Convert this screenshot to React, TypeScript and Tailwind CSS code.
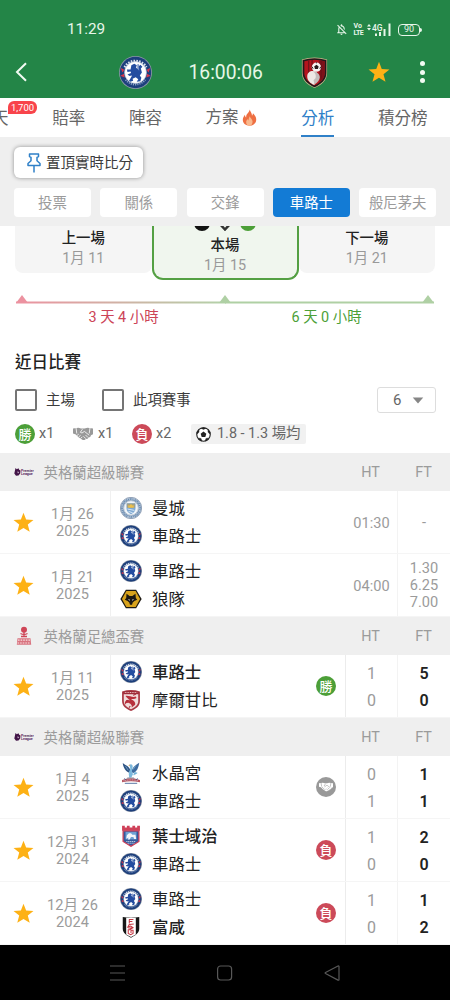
import type { ReactNode } from "react";
import clsx from "clsx";
import { MdOutlineNotificationsOff } from "react-icons/md";

type Team = { name: string; crest: string; bold?: boolean };
type Match = {
  id: number;
  day: string;
  year: string;
  home: Team;
  away: Team;
  result?: "win" | "draw" | "loss";
  time?: string;
  odds?: string[];
  ht?: [number, number];
  ft?: [number, number];
};
type League = { id: number; name: string; logo: "pl" | "fa"; matches: Match[] };

const chelsea: Team = { name: "車路士", crest: "chelsea" };

const leagues: League[] = [
  {
    id: 1,
    name: "英格蘭超級聯賽",
    logo: "pl",
    matches: [
      { id: 11, day: "1月 26", year: "2025", home: { name: "曼城", crest: "city" }, away: chelsea, time: "01:30", odds: ["-"] },
      { id: 12, day: "1月 21", year: "2025", home: chelsea, away: { name: "狼隊", crest: "wolves" }, time: "04:00", odds: ["1.30", "6.25", "7.00"] },
    ],
  },
  {
    id: 2,
    name: "英格蘭足總盃賽",
    logo: "fa",
    matches: [
      { id: 21, day: "1月 11", year: "2025", home: { ...chelsea, bold: true }, away: { name: "摩爾甘比", crest: "morecambe" }, result: "win", ht: [1, 0], ft: [5, 0] },
    ],
  },
  {
    id: 3,
    name: "英格蘭超級聯賽",
    logo: "pl",
    matches: [
      { id: 31, day: "1月 4", year: "2025", home: { name: "水晶宮", crest: "palace" }, away: chelsea, result: "draw", ht: [0, 1], ft: [1, 1] },
      { id: 32, day: "12月 31", year: "2024", home: { name: "葉士域治", crest: "ipswich", bold: true }, away: chelsea, result: "loss", ht: [1, 0], ft: [2, 0] },
      { id: 33, day: "12月 26", year: "2024", home: chelsea, away: { name: "富咸", crest: "fulham", bold: true }, result: "loss", ht: [1, 0], ft: [1, 2] },
    ],
  },
];

const filters = ["投票", "關係", "交鋒", "車路士", "般尼茅夫"];

const crests: Record<string, ReactNode> = {
  chelsea: (
    <>
      <circle cx="16" cy="16" r="16" fill="#8d97a8" />
      <circle cx="16" cy="16" r="15.2" fill="#1d3f7c" />
      <path d="M5.5 11A11.9 11.9 0 0 1 26.500 11" fill="none" stroke="#d9e0ec" strokeWidth="2.300" strokeDasharray="1.500 1.200" />
      <path d="M6.500 23A11.900 11.900 0 0 0 25.500 23" fill="none" stroke="#8ea4ca" strokeWidth="1.700" strokeDasharray="1.100 1" />
      <path d="M2.500 12.500l2 1-1 1.500zM2.500 19l2-1 .3 2zM29.500 12.500l-2 1 1 1.500zM29.500 19l-2-1-.3 2z" fill="#d9354a" stroke="#d9354a" />
      <circle cx="16" cy="16" r="10.600" fill="#fff" stroke="#b9c3d6" strokeWidth=".6" />
      <path
        d="M12 9l2.800-1.500 2.500 1.500-.8 2.200 3 2.800-.3-4 1.500-1.500 2 2-1.500 1.500 1 4-2 3 1.500 2-1 3.500-3.500.5 1.500-2.500-2.500-2-3 1.500.5 2-2.500 1-1.500-1 1.500-2.500 1.500-2.500-2.500.5-2-1.500 3.500-1.500-.5-1.500-3 .5-.5-2.500 3.500.2z"
        fill="#244da0"
      />
      <path d="M18.500 8v6M13.500 17.500l4-1.500" stroke="#244da0" strokeWidth="1" />
    </>
  ),
  bournemouth: (
    <>
      <path d="M3 2.500Q16-1.500 29 2.500v14C29 24 23 29 16 32 9 29 3 24 3 16.500z" fill="#cdb88c" />
      <path d="M3.700 3.200Q16-.6 28.300 3.200v13.200C28.300 23.500 22.500 28.200 16 31.200 9.500 28.200 3.700 23.500 3.700 16.400z" fill="#211a1b" />
      <path d="M5.500 4.500Q16 1.200 26.500 4.500v12c0 6-4.500 10-10.500 13-6-3-10.500-7-10.500-13z" fill="#b5141d" />
      <path d="M20.500 3.500l6 1v12c0 4-2 7-5 9.500z" fill="#7d1219" />
      <path d="M10 4v14M13.500 3v10M23 4v18" stroke="#6d1219" strokeWidth="1.200" />
      <path d="M8.500 20c0-4 3-6 7-5.500 2 .2 4 2 3.500 5l1.500 1.500-1.800 1 .3 2.500-2.500 1-.5 3.500c-4.500-2-7.500-5-7.500-9z" fill="#eee9e5" />
      <path d="M14 15c3 1 4 4 3 7l-2 2 1 4.500c3-2 5.500-4.500 5.500-7.500s-3-6.500-7.500-6z" fill="#c2bdbb" />
      <circle cx="18" cy="10.500" r="4.800" fill="#f7f4f2" />
      <path d="M18 8l2.300 1.800-.8 2.700h-3l-.8-2.700z" fill="#25191a" />
      <path d="M13.500 10l1 2M18 5.500v1M22.500 10l-1 2" stroke="#25191a" />
    </>
  ),
  city: (
    <>
      <circle cx="16" cy="16" r="15.500" fill="#fff" stroke="#5b7291" />
      <circle cx="16" cy="16" r="13" fill="none" stroke="#6688ae" strokeWidth="3.400" />
      <circle cx="16" cy="16" r="13" fill="none" stroke="#e3ecf5" strokeWidth="1.300" strokeDasharray="2 1.400" />
      <circle cx="16" cy="16" r="10.700" fill="#f1f6fa" stroke="#667d9b" strokeWidth=".7" />
      <path d="M9.500 9h13v8c0 3.800-3 6.500-6.500 8-3.500-1.500-6.500-4.200-6.500-8z" fill="#7fa9d2" />
      <path d="M10 9.500h12v6H10z" fill="#a3a084" />
      <path d="M12 15.500v-3.500l2 .5 2-2.500 2 2.500 2-.5v3.500z" fill="#ecbf48" />
      <path d="M11 17.500l10 2M12.500 21l6 2" stroke="#dcecf9" strokeWidth="1.300" />
    </>
  ),
  wolves: (
    <>
      <path d="M8.500 2.500h15L31.500 16l-8 13.500h-15L.5 16z" fill="#1c1812" />
      <path d="M9.300 4.500h13.400L29.200 16l-6.500 11.500H9.300L2.800 16z" fill="#d8a31d" />
      <path d="M9.500 8.500l4.500 3h4l4.500-3 .5 6 2 2.500-4 2-2.500 2-1 3.500h-3l-1-3.500-2.500-2-4-2 2-2.500z" fill="#1c1812" />
      <path d="M11.500 16l3 1-.5 1.500zM20.500 16l-3 1 .5 1.500z" fill="#fff" />
    </>
  ),
  morecambe: (
    <>
      <path d="M3 3.500Q16-.5 29 3.500v14C29 25 23 29 16 32 9 29 3 25 3 17.500z" fill="#a93843" />
      <path d="M5.500 7.500h21v10c0 6-5 9.500-10.500 12-5.500-2.500-10.500-6-10.500-12z" fill="#f0dcdb" />
      <path d="M5 4.500q11-3 22 0v2.500H5z" fill="#9c2936" />
      <path d="M7 5.200h18" stroke="#e9bcbc" strokeWidth="1.500" strokeDasharray="1.500 1" />
      <path d="M8 10c5-1 10 3 15 1l1 2c-3 2-6 1-8 2 4 2 7 4 6 8l-5 4c1-4-2-6-5-7-3 0-4 1-4 3-2-3-1-6 3-7l4 .5c-3-2-5-4-7-6.500z" fill="#b8303c" />
      <path d="M19 9l4-1.200M9 17l3-.5M15 25l-2 2" stroke="#a52b38" strokeWidth="1.500" />
    </>
  ),
  palace: (
    <>
      <path d="M14 16C8.500 14 4.500 8 4 1.500c3 3 6.500 3.500 8.500 6 2 2 2.500 4 2.500 6z" fill="#2d5384" />
      <path d="M16.500 15c1-7 5-10 11.500-14-1 7-3 12-8 15z" fill="#3c6a9f" />
      <path d="M13.500 4c3-2 5 0 5 2.500l-1.500 8 2 3-3 6h-3c1-3-1-5 0-8 .5-4 3-5 1.500-8z" fill="#7ab7dc" />
      <path d="M21 15l4 1-5 3zM8 6l4 6M23 5l-4 6" fill="#4fa6d5" stroke="#86b9d8" />
      <path d="M14 3.500l-2 2 3-.2z" fill="#d69d45" />
      <path d="M11 22h9l2 3H9z" fill="#a8b0bd" />
      <path d="M3 26q13-4 26 0v3.500q-13-3-26 0z" fill="#b4505c" />
      <path d="M5 27.500q11-3 22 0" fill="none" stroke="#dbd6e2" strokeDasharray="1.500 1" />
      <path d="M7 31h18M6 24l3 2M26 24l-3 2" stroke="#3a5e92" strokeWidth="1.200" />
    </>
  ),
  ipswich: (
    <>
      <path d="M3 1h4v2.500h3V1h4v2.500h4V1h4v2.500h3V1h4v7.500H3z" fill="#cf4058" />
      <path d="M4.500 8.500h23V24L16 31 4.500 24z" fill="#35599b" stroke="#cf4058" strokeWidth="1.800" />
      <path d="M8 10h16v11H8z" fill="#6fa2d4" />
      <path d="M9 20l1-5 3-3h3l2 2h4.500l1 6.500H20.500l-1-3h-3.500l-2 3.500h-2.500l1-3z" fill="#f4f6f9" />
      <path d="M9 24h14M11 26.500h10" stroke="#dde5f2" strokeWidth="1.100" strokeDasharray="2 .8" />
    </>
  ),
  fulham: (
    <>
      <path d="M4 1.500q12 2 24 0v17c0 6-5 9.500-12 13C9 28 4 24.500 4 18.500z" fill="#171717" />
      <path d="M9 2.500q7 .8 14 0V27L16 30.500 9 27z" fill="#fff" />
      <path
        d="M13.500 5v6M13 5h6.500M13.500 8h4.500M20 11.500l-6.500 1-2 3.500 4-1.500 4 3M12 17.500h6l-4 2.500h-2v5.500l3.500 1.800 3.500-2v-4.500h-3v4"
        fill="none"
        stroke="#c53943"
        strokeWidth="1.500"
      />
    </>
  ),
};

const Crest = ({ name, className }: { name: string; className: string }) => (
  <svg viewBox="0 0 32 32" className={clsx("shrink-0", className)}>
    {crests[name]}
  </svg>
);

const Star = ({ className }: { className?: string }) => (
  <svg viewBox="0 0 24 24" className={clsx("fill-[#fdb115]", className)}>
    <path d="M12 .8l3 7.800 8.400.6-6.500 5.200 2.200 8.300L12 18.200 4.900 22.700l2.200-8.300L.6 9.200l8.400-.6z" />
  </svg>
);

const Handshake = ({ className, line }: { className: string; line: string }) => (
  <svg viewBox="0 0 20 14" className={clsx("shrink-0", className)} fill="currentColor">
    <path d="M0 1.500L5.500.8l2.500.7h3.500L14.500.8l5.500.7v5.700l-2 1-.8 1.800-1.700.5-.8 1.300-1.700.3-1.500 1-1.700-.1-4.300-2.800L2.800 7.500 0 6.500z" />
    <path d="M3 .8l.8 5.700M17 .8l-.8 5.700M9.500 2.200L7.300 5.300l1.700.7 2.400-1.600 4.800 3.800M4 8.500l1.800-1.400M5.600 10l2-1.700M7.600 11.500l1.700-1.700M12.500 8l2.500 2.500M10.500 9.300l2.300 2.400" fill="none" stroke={line} strokeWidth=".8" />
  </svg>
);

const Ball = () => (
  <svg viewBox="0 0 16 16" className="mr-[6px] h-[15px] w-[15px] shrink-0">
    <circle cx="8" cy="8" r="7.200" fill="#fff" stroke="#222222" strokeWidth="1.200" />
    <path d="M8 4.900l3 2.200-1.100 3.500H6.100L5 7.100z" fill="#222222" />
    <path d="M5.300 1.300L8 2.700l2.700-1.400L8 .6zM1 7.500l2.200-1.800.1-3L1 5.500zM15 7.500l-2.200-1.800-.1-3L15 5.500zM2.400 11.700l3 .5 1 2.900-2.700-1.200zM13.600 11.700l-3 .5-1 2.900 2.700-1.200z" fill="#222222" stroke="#222222" strokeWidth=".4" />
  </svg>
);

const Flame = () => (
  <svg viewBox="0 0 24 28" className="h-[17px] w-[15px]">
    <path d="M12.500 1c.5 4 4 6 3.500 10 1-.8 1.600-2 1.600-4C21 10 23.500 14 23 18.500 22.500 24 18 27.500 12 27.500S1.500 24 1 18.500C.7 14 3 12 4.500 9.500c.3 2 .5 3.500 2 4.500C6 8 11.500 6.500 12.500 1z" fill="#ee6f42" />
    <path d="M12.500 12c.5 3 4 4.500 4.500 8 .4 4-2 7.500-5 7.500s-6-2.500-5.500-6.500c.3-2 1.500-3 2-4.500.6 1 1 2 2 2.500-.3-3 1-5 2-7z" fill="#f9b98d" />
  </svg>
);

const LeagueLogo = ({ logo }: { logo: "pl" | "fa" }) => {
  if (logo === "fa") {
    return (
      <svg viewBox="0 0 20 20" className="h-[20px] w-[20px]">
        <circle cx="10" cy="3.800" r="3" fill="#cf4557" />
        <path d="M6.500 7.500q3.500 2 7 0M10 6v5M7 10.500h6" fill="none" stroke="#cf4557" strokeWidth="1.300" />
        <path d="M3.500 12.200h13l.7 6.600H2.800z" fill="#d9737f" />
        <path d="M4 14.200h12M3.500 17h13" stroke="#f7dfe1" strokeWidth="1.200" strokeDasharray="1.600 1" />
      </svg>
    );
  }
  return (
    <svg viewBox="0 0 20 8" className="h-[8px] w-[20px]">
      <path d="M1.500 0l1.300 1.200L4.500.3l.7 1.500 1.300.7-.3 3L4.500 7.500 2 7.700.3 5.500l.5-2.300z" fill="#431548" />
      <path d="M3.200 3.500l2 .5-1.200 1.500z" fill="#d9c9da" />
      <text x="7" y="3.800" fontSize="3.600" fontWeight="700" fill="#5a2c60">Premier</text>
      <text x="7" y="7.200" fontSize="3.600" fontWeight="700" fill="#5a2c60">League</text>
    </svg>
  );
};

const ResultBadge = ({ result }: { result: "win" | "draw" | "loss" }) => (
  <span
    className={clsx(
      "flex h-[20px] w-[20px] shrink-0 items-center justify-center rounded-full text-[13px] leading-none font-medium text-white",
      result === "win" && "bg-[#4c9f38]",
      result === "draw" && "bg-[#999999]",
      result === "loss" && "bg-[#cc4a59]"
    )}
  >
    {result === "draw" ? <Handshake className="h-[10px] w-[14px]" line="#999999" /> : <span>{result === "win" ? "勝" : "負"}</span>}
  </span>
);

const StatusBar = () => (
  <div className="flex h-[46px] items-center justify-between pt-[13px] pr-[28px] pl-[67px] text-[15.3px] text-[#e8f6ea]">
    <span>11:29</span>
    <div className="flex items-center">
      <MdOutlineNotificationsOff className="mr-[6px] h-[13px] w-[13px]" />
      <span className="mr-[4px] flex flex-col text-[7px] leading-[6.5px] font-bold">
        <span>Vo</span>
        <span className="tracking-[-0.6px]">LTE</span>
      </span>
      <svg viewBox="0 0 24 14" className="mr-[7px] h-[14px] w-[24px] fill-[#e8f6ea]">
        <path d="M0 3.500l2-2.500 2 2.500zM0 5l2 2.500L4 5z" />
        <text x="5" y="7.500" fontSize="8.500" fontWeight="500">4G</text>
        <path d="M8 10.500h2V13H8zM12 9h2v4h-2zM16.500 6h2v7h-2zM21.500.5h2V13h-2z" />
      </svg>
      <span className="flex h-[12px] w-[22px] items-center justify-center rounded-[4px] border border-[#e8f6ea] text-[9px] leading-none">90</span>
      <span className="h-[4px] w-[2px] rounded-r bg-[#e8f6ea]" />
    </div>
  </div>
);

const AppBar = () => (
  <div className="flex h-[52px] items-center">
    <svg viewBox="0 0 12 20" className="ml-[15px] h-[20px] w-[12px]" fill="none" stroke="#f2fbf3" strokeWidth="2">
      <path d="M11 1.200L2 10l9 8.800" />
    </svg>
    <Crest name="chelsea" className="ml-[92px] h-[33px] w-[33px]" />
    <span className="ml-[36.500px] w-[74.500px] pt-[2px] text-[19.300px] whitespace-nowrap text-[#e6f7e6]">16:00:06</span>
    <Crest name="bournemouth" className="ml-[36px] h-[33px] w-[31px]" />
    <Star className="ml-[38px] h-[22px] w-[22px]" />
    <span className="ml-[30px] flex flex-col gap-[3.500px]">
      <span className="h-[5px] w-[5px] rounded-full bg-[#f2fbf3]" />
      <span className="h-[5px] w-[5px] rounded-full bg-[#f2fbf3]" />
      <span className="h-[5px] w-[5px] rounded-full bg-[#f2fbf3]" />
    </span>
  </div>
);

const Tabs = () => (
  <nav className="flex h-[39px] gap-[43.700px] bg-white text-[16.500px] leading-[42px] whitespace-nowrap text-[#666666]">
    <span className="relative -ml-[8px] w-[16.500px] shrink-0">
      天
      <span className="absolute top-[3px] left-[16px] flex h-[13px] w-[29px] items-center justify-center rounded-[6px] rounded-bl-none bg-[#f8444b] text-[9.500px] leading-none text-white">
        1,700
      </span>
    </span>
    <span className="shrink-0">賠率</span>
    <span className="shrink-0">陣容</span>
    <span className="flex w-[52px] shrink-0 items-center gap-[3px]">
      方案
      <Flame />
    </span>
    <span className="h-[39px] shrink-0 border-b-2 border-[#2f80c8] text-[#2f80c8]">分析</span>
    <span className="shrink-0">積分榜</span>
  </nav>
);

const Toolbar = () => (
  <div className="h-[89px] bg-[#efefef] pt-[10px] pl-[14px]">
    <button className="flex h-[31px] w-[129px] items-center gap-[5px] rounded-[6px] bg-white pl-[13px] text-[14.500px] whitespace-nowrap text-[#3c3c3c] shadow-[0_0_4px_rgba(0,0,0,0.4)]">
      <svg viewBox="0 0 14 20" className="h-[20px] w-[14px] shrink-0" fill="none" stroke="#2f80c8" strokeWidth="1.500" strokeLinejoin="round">
        <path d="M2.500 1h9v2.500l-1.500.8v3.500l3 2.700v2H1v-2l3-2.700V4.300l-1.500-.8zM7 12.500V19.500" />
      </svg>
      <span className="pt-[2px]">置頂實時比分</span>
    </button>
    <div className="mt-[10px] flex gap-[9.300px]">
      {filters.map((label) => (
        <button
          key={label}
          className={clsx(
            "h-[29px] w-[77px] shrink-0 rounded-[4px] pt-[2px] text-[14.400px] leading-[27px] whitespace-nowrap",
            label === "車路士" ? "bg-[#137bd5] text-white" : "bg-white text-[#9b9b9b]"
          )}
        >
          {label}
        </button>
      ))}
    </div>
  </div>
);

const Fixtures = () => (
  <section className="h-[119px] px-[15px] text-[14.400px]">
    <div className="flex h-[54px] items-start text-center leading-[20px]">
      <div className="h-[47px] flex-1 rounded-b-[8px] bg-[#f5f5f5] pt-[3px]">
        <p className="font-medium text-[#222222]">上一場</p>
        <p className="text-[#999999]">1月 11</p>
      </div>
      <div className="h-[54px] w-[147px] overflow-hidden rounded-b-[11px] border-x-[2.500px] border-b-[2.500px] border-[#54a043] bg-[#f0f6ee]">
        <div className="-mt-[11px] flex h-[17px] items-start justify-center gap-[8px]">
          <span className="h-[16px] w-[16px] rounded-full bg-[#111111]" />
          <svg viewBox="0 0 14 16" className="h-[16px] w-[14px]" fill="none" stroke="#333333" strokeWidth="2.500">
            <path d="M1 8l6 6.500L13 8" />
          </svg>
          <span className="h-[16px] w-[16px] rounded-full bg-[#4c9f38]" />
        </div>
        <p className="mt-[4px] font-medium text-[#222222]">本場</p>
        <p className="text-[#999999]">1月 15</p>
      </div>
      <div className="h-[47px] flex-1 rounded-b-[8px] bg-[#f5f5f5] pt-[3px]">
        <p className="font-medium text-[#222222]">下一場</p>
        <p className="text-[#999999]">1月 21</p>
      </div>
    </div>
    <svg viewBox="0 0 420 9" className="mt-[15px] h-[9px] w-[420px]">
      <defs>
        <linearGradient id="rest" x1="0" x2="1">
          <stop offset="0" stopColor="#ec92a0" />
          <stop offset="1" stopColor="#b3d2a9" />
        </linearGradient>
      </defs>
      <rect x="1" y="6.500" width="210" height="2" fill="url(#rest)" />
      <rect x="210" y="6.500" width="209" height="2" fill="#afd0a4" />
      <path d="M1 8l6-8 6 8z" fill="#ec92a0" />
      <path d="M204 8l6-8 6 8zM407 8l6-8 6 8z" fill="#afd0a4" />
    </svg>
    <div className="flex pt-[2px] text-center leading-[24px]">
      <span className="w-[217px] text-[#cc4357]">3 天 4 小時</span>
      <span className="w-[189px] text-[#4c9f38]">6 天 0 小時</span>
    </div>
  </section>
);

const Filters = () => (
  <section className="h-[108px] px-[15px] text-[14.400px] text-[#555555]">
    <h2 className="pt-[6px] text-[16.500px] leading-[24px] font-medium text-[#222222]">近日比賽</h2>
    <div className="mt-[11px] flex h-[28px] items-center whitespace-nowrap text-[#3c3c3c]">
      <span className="h-[22px] w-[22px] rounded-[2px] border-2 border-[#757575]" />
      <span className="ml-[9px] w-[56px] pt-[2px]">主場</span>
      <span className="h-[22px] w-[22px] rounded-[2px] border-2 border-[#757575]" />
      <span className="ml-[9px] pt-[2px]">此項賽事</span>
      <span className="-mr-px ml-auto flex h-[26px] w-[59px] items-center rounded-[3px] border border-[#dddddd] pl-[15px] text-[15px] text-[#666666]">
        <span className="pt-px">6</span>
        <svg viewBox="0 0 12 8" className="ml-[11px] h-[7px] w-[12px] fill-[#868686]">
          <path d="M0 .5h12l-6 7z" />
        </svg>
      </span>
    </div>
    <div className="mt-[10px] flex h-[20px] items-center whitespace-nowrap text-[#666666]">
      <ResultBadge result="win" />
      <span className="ml-[4px] w-[34px]">x1</span>
      <Handshake className="h-[14px] w-[20px] text-[#999999]" line="#ffffff" />
      <span className="ml-[5px] w-[34px]">x1</span>
      <ResultBadge result="loss" />
      <span className="ml-[4px] w-[35px]">x2</span>
      <span className="flex h-[20px] w-[115px] items-center rounded-[2px] bg-[#f1f1f1] pl-[5px]">
        <Ball />
        1.8 - 1.3 場均
      </span>
    </div>
  </section>
);

const TeamLine = ({ team }: { team: Team }) => (
  <div className="flex h-[27.500px] items-center gap-[10px]">
    <Crest name={team.crest} className="h-[22px] w-[22px]" />
    <span className={clsx("pt-[3px] text-[16.400px] whitespace-nowrap text-[#222222]", team.bold && "font-medium")}>{team.name}</span>
  </div>
);

const MatchRow = ({ match }: { match: Match }) => (
  <div className="flex h-[63px] border-b border-[#f5f5f5] bg-white text-[#9b9b9b]">
    <div className="flex w-[35px] items-center pt-px pl-[13px]">
      <Star className="h-[21px] w-[21px] shrink-0" />
    </div>
    <div className="flex w-[76px] flex-col justify-center border-r border-[#f0f0f0] pt-[2px] text-center text-[14.600px] leading-[17px]">
      <span>{match.day}</span>
      <span>{match.year}</span>
    </div>
    <div className="flex-1 pt-[3.500px] pl-[9px]">
      <TeamLine team={match.home} />
      <TeamLine team={match.away} />
    </div>
    <div className="flex items-center pr-[9px]">{match.result && <ResultBadge result={match.result} />}</div>
    <div
      className={clsx(
        "flex w-[53px] flex-col items-center border-x border-r-[#f3f3f3]",
        match.ht ? "border-l-[#ececec] pt-[4.500px]" : "justify-center border-l-transparent pt-[3px] text-[14.600px]"
      )}
    >
      {match.ht ? match.ht.map((n, i) => <span key={i} className="text-[16px] leading-[27.500px]">{n}</span>) : match.time}
    </div>
    <div className={clsx("flex w-[52px] flex-col items-center", match.ft ? "pt-[4.500px]" : "justify-center text-[14.600px] leading-[17px]")}>
      {match.ft
        ? match.ft.map((n, i) => <span key={i} className="text-[16px] leading-[27.500px] font-semibold text-[#222222]">{n}</span>)
        : match.odds?.map((odd) => <span key={odd}>{odd}</span>)}
    </div>
  </div>
);

const NavBar = () => (
  <div className="flex h-[55px] items-center justify-center bg-black">
    <svg viewBox="0 0 232 18" className="h-[18px] w-[232px]" fill="none" stroke="#585858" strokeWidth="1.200">
      <path d="M1 2h15M1 9h15M1 16h15" />
      <rect x="108.600" y="2" width="14" height="14" rx="3" />
      <path d="M230 2.500v13q0 1-1 .6L216.500 9.500q-.8-.5 0-1L229 2q1-.4 1 .5z" strokeLinejoin="round" />
    </svg>
  </div>
);

export default function App() {
  return (
    <div className="h-[1000px] w-[450px] overflow-hidden bg-white font-['Roboto','Noto_Sans_CJK_TC',sans-serif]">
      <header className="bg-[#238547]">
        <StatusBar />
        <AppBar />
      </header>
      <Tabs />
      <Toolbar />
      <Fixtures />
      <Filters />
      {leagues.map((league) => (
        <section key={league.id}>
          <div className="flex h-[38px] items-center bg-[#efefef] text-[14.400px] text-[#9b9b9b]">
            <span className="flex w-[43.500px] justify-center pl-[4px]">
              <LeagueLogo logo={league.logo} />
            </span>
            <span className="flex-1 pt-[3px]">{league.name}</span>
            <span className="w-[53px] pt-[2px] text-center">HT</span>
            <span className="w-[53px] pt-[2px] text-center">FT</span>
          </div>
          {league.matches.map((match) => (
            <MatchRow key={match.id} match={match} />
          ))}
        </section>
      ))}
      <NavBar />
    </div>
  );
}
